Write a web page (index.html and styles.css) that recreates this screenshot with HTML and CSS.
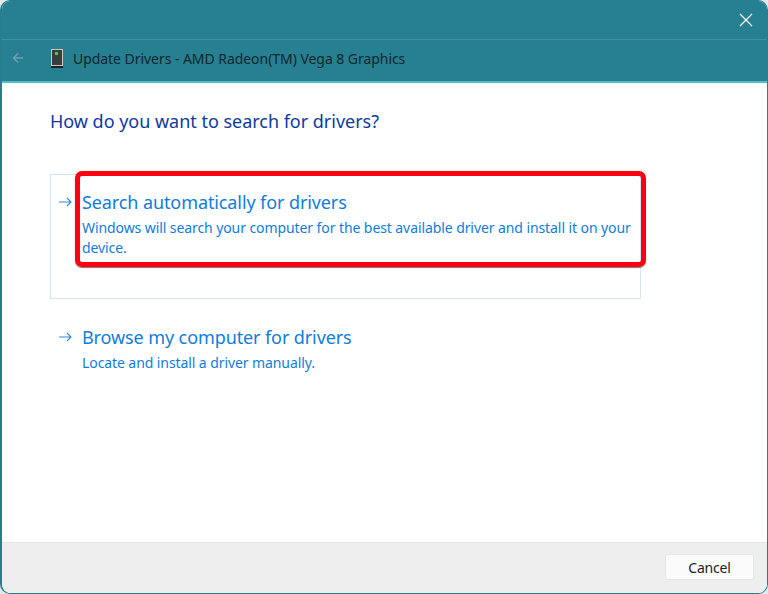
FILE: index.html
```html
<!DOCTYPE html>
<html lang="en">
<head>
<meta charset="utf-8">
<title>Update Drivers</title>
<link rel="stylesheet" href="styles.css">
</head>
<body>
<div class="window">
  <div class="titlebar">
    <svg class="close" width="14" height="14" viewBox="0 0 14 14"><path d="M1 1L13 13M13 1L1 13" stroke="#fff" stroke-width="1.1" fill="none"/></svg>
  </div>
  <div class="header">
    <svg class="back" width="12" height="12" viewBox="0 0 12 12"><path d="M11 6H1.5M6 1.5L1.5 6L6 10.5" stroke="#6fa3b0" stroke-width="1.3" fill="none"/></svg>
    <svg class="device" width="12" height="19" viewBox="0 0 12 19">
      <rect x="0.5" y="0.5" width="11" height="16" fill="#3c3c3c" stroke="#c9c9c9"/>
      <rect x="4" y="3" width="3" height="3" fill="#2be02b"/>
      <rect x="0" y="17" width="12" height="2" fill="#1e1e1e"/>
    </svg>
    <span class="header-title">Update Drivers - AMD Radeon(TM) Vega 8 Graphics</span>
  </div>
  <main class="content">
    <h1 class="question">How do you want to search for drivers?</h1>
    <div class="option option-focused">
      <svg class="arrow" width="13" height="10" viewBox="0 0 13 10"><path d="M0 5H12M8 1L12 5L8 9" stroke="#2b8ae0" stroke-width="1.1" fill="none"/></svg>
      <div class="option-text">
        <div class="option-title">Search automatically for drivers</div>
        <div class="option-desc">Windows will search your computer for the best available driver and install it on your device.</div>
      </div>
      <div class="highlight"></div>
    </div>
    <div class="option">
      <svg class="arrow" width="13" height="10" viewBox="0 0 13 10"><path d="M0 5H12M8 1L12 5L8 9" stroke="#2b8ae0" stroke-width="1.1" fill="none"/></svg>
      <div class="option-text">
        <div class="option-title">Browse my computer for drivers</div>
        <div class="option-desc">Locate and install a driver manually.</div>
      </div>
    </div>
  </main>
  <footer class="footer">
    <button class="cancel" type="button">Cancel</button>
  </footer>
</div>
</body>
</html>
```
FILE: styles.css
```css
* { box-sizing: border-box; }
html, body { margin: 0; height: 100%; background: #e8e8e8; overflow: hidden; }
body { font-family: "Noto Sans", "Open Sans", sans-serif; }
.window {
  width: 768px;
  height: 594px;
  display: flex;
  flex-direction: column;
  background: #fff;
  border: 1px solid #24808f;
  border-left-width: 2px;
  border-radius: 10px;
  overflow: hidden;
}
.titlebar {
  height: 38px;
  flex: none;
  background: #268091;
  display: flex;
  justify-content: flex-end;
  align-items: center;
  padding: 0 14px 0 0;
}
.header {
  height: 44px;
  flex: none;
  background: #268091;
  border-top: 1px solid #3f94a4;
  border-bottom: 2px solid #55bccb;
  display: flex;
  align-items: center;
  padding-bottom: 4px;
  color: #10262d;
}
.back { margin-left: 10px; margin-bottom: 2px; }
.device { margin-left: 27px; }
.header-title {
  margin-left: 10px;
  font-size: 14px;
  letter-spacing: -0.05px;
  white-space: nowrap;
}
.content {
  flex: 1;
  padding: 24px 0 0 48px;
}
.question {
  margin: 0 0 39px;
  font-size: 18px;
  line-height: 28px;
  font-weight: 400;
  color: #0f3a9e;
  letter-spacing: -0.02px;
}
.option {
  position: relative;
  width: 591px;
  display: flex;
  padding: 14px 8px 0 8px;
  border: 1px solid transparent;
  color: #0f7ddc;
  height: 120px;
}
.option-focused {
  height: 125px;
  border-color: #d3e6f5;
  margin-bottom: 10px;
}
.arrow {
  flex: none;
  margin: 8px 10px 0 0;
}
.option-title {
  font-size: 18px;
  line-height: 26px;
  letter-spacing: -0.1px;
}
.option-desc {
  font-size: 14px;
  line-height: 20px;
  letter-spacing: -0.085px;
  margin-top: 3px;
}
.highlight {
  position: absolute;
  left: 24px;
  top: -4px;
  width: 571px;
  height: 96px;
  border: 5px solid #ff0010;
  border-radius: 7px;
  box-shadow: 0 1px 1px #777;
}
.footer {
  flex: none;
  height: 51px;
  background: #eeeeee;
  border-top: 1px solid #e4e4e4;
  display: flex;
  justify-content: flex-end;
  align-items: flex-start;
  padding: 11px 13px 0 0;
}
.cancel {
  width: 89px;
  height: 26px;
  padding: 0;
  font: inherit;
  font-size: 14px;
  letter-spacing: -0.2px;
  color: #222;
  background: #fbfbfb;
  border: 1px solid #e6e6e6;
  border-radius: 3px;
}
```
